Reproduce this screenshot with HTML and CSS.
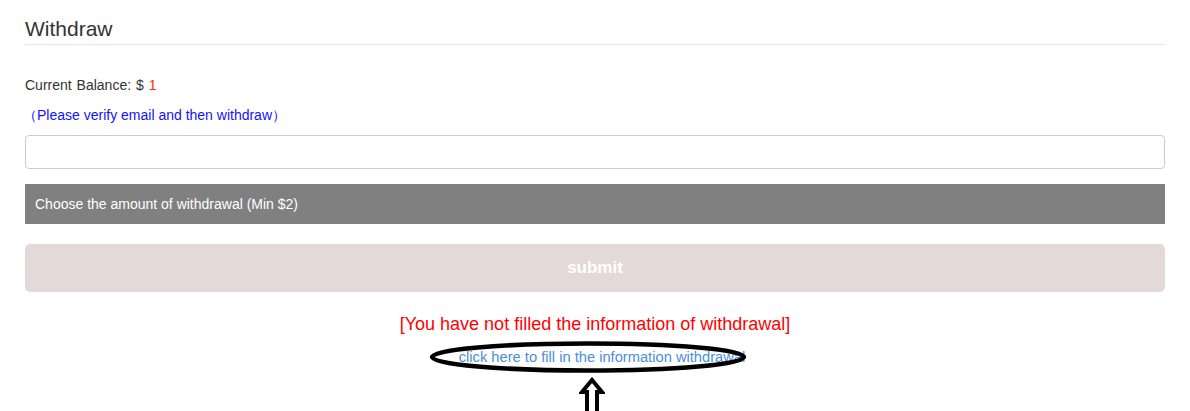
FILE: index.html
```html
<!DOCTYPE html>
<html>
<head>
<meta charset="utf-8">
<link rel="stylesheet" href="styles.css">
</head>
<body>
<div class="page">
  <h2 class="title">Withdraw</h2>
  <div class="balance">Current Balance: $ <span class="amount">1</span></div>
  <div class="note">（Please verify email and then withdraw）</div>
  <input class="field" type="text">
  <div class="choose">Choose the amount of withdrawal (Min $2)</div>
  <button class="submit">submit</button>
  <div class="warn">[You have not filled the information of withdrawal]</div>
  <div class="linkrow">
    <a class="link" href="#">click here to fill in the information withdrawal</a>
  </div>
</div>
<svg class="ellipse" width="324" height="36" viewBox="0 0 324 36">
  <ellipse cx="162" cy="18" rx="156" ry="13.5" fill="none" stroke="#000" stroke-width="4.5"/>
</svg>
<svg class="arrow" width="26" height="36" viewBox="0 0 26 36">
  <path d="M13 3 L23 15 L18 15 L18 38 L8 38 L8 15 L3 15 Z" fill="#fff" stroke="#000" stroke-width="4" stroke-linejoin="miter"/>
</svg>
</body>
</html>
```
FILE: styles.css
```css
html, body {
  margin: 0;
  padding: 0;
  background: #fff;
}
body {
  font-family: "Liberation Sans", Arial, sans-serif;
  color: #333;
  position: relative;
  height: 411px;
  overflow: hidden;
}
.page {
  padding: 0 25px;
  display: flex;
  flex-direction: column;
}
.title {
  margin: 17px 0 0;
  font-size: 21px;
  font-weight: normal;
  line-height: 24px;
  padding-bottom: 3px;
  border-bottom: 1px solid #e5e5e5;
  color: #333;
}
.balance {
  margin-top: 30px;
  font-size: 14px;
  line-height: 20px;
  word-spacing: 1px;
}
.amount {
  color: #ff2a00;
}
.note {
  margin-top: 10px;
  font-size: 14px;
  line-height: 20px;
  color: #1212ff;
  margin-left: -2px;
}
.field {
  margin-top: 10px;
  height: 34px;
  box-sizing: border-box;
  border: 1px solid #ccc;
  border-radius: 4px;
  padding: 0 10px;
  font-size: 14px;
  background: #fff;
}
.choose {
  margin-top: 15px;
  height: 40px;
  line-height: 40px;
  background: #808080;
  color: #fff;
  font-size: 14px;
  padding-left: 10px;
}
.submit {
  margin-top: 20px;
  height: 48px;
  border: none;
  border-radius: 5px;
  background: #e3d9d9;
  color: #fff;
  font-family: "Liberation Sans", Arial, sans-serif;
  font-size: 17px;
  font-weight: bold;
}
.warn {
  margin-top: 21px;
  text-align: center;
  color: #ff0000;
  font-size: 18px;
  line-height: 22px;
}
.linkrow {
  margin-top: 12px;
  text-align: center;
  font-size: 14.7px;
  line-height: 20px;
}
.link {
  color: #4a8fd8;
  text-decoration: none;
  padding-left: 14px;
}
.ellipse {
  position: absolute;
  left: 426px;
  top: 339px;
}
.arrow {
  position: absolute;
  left: 579px;
  top: 377px;
}
```
